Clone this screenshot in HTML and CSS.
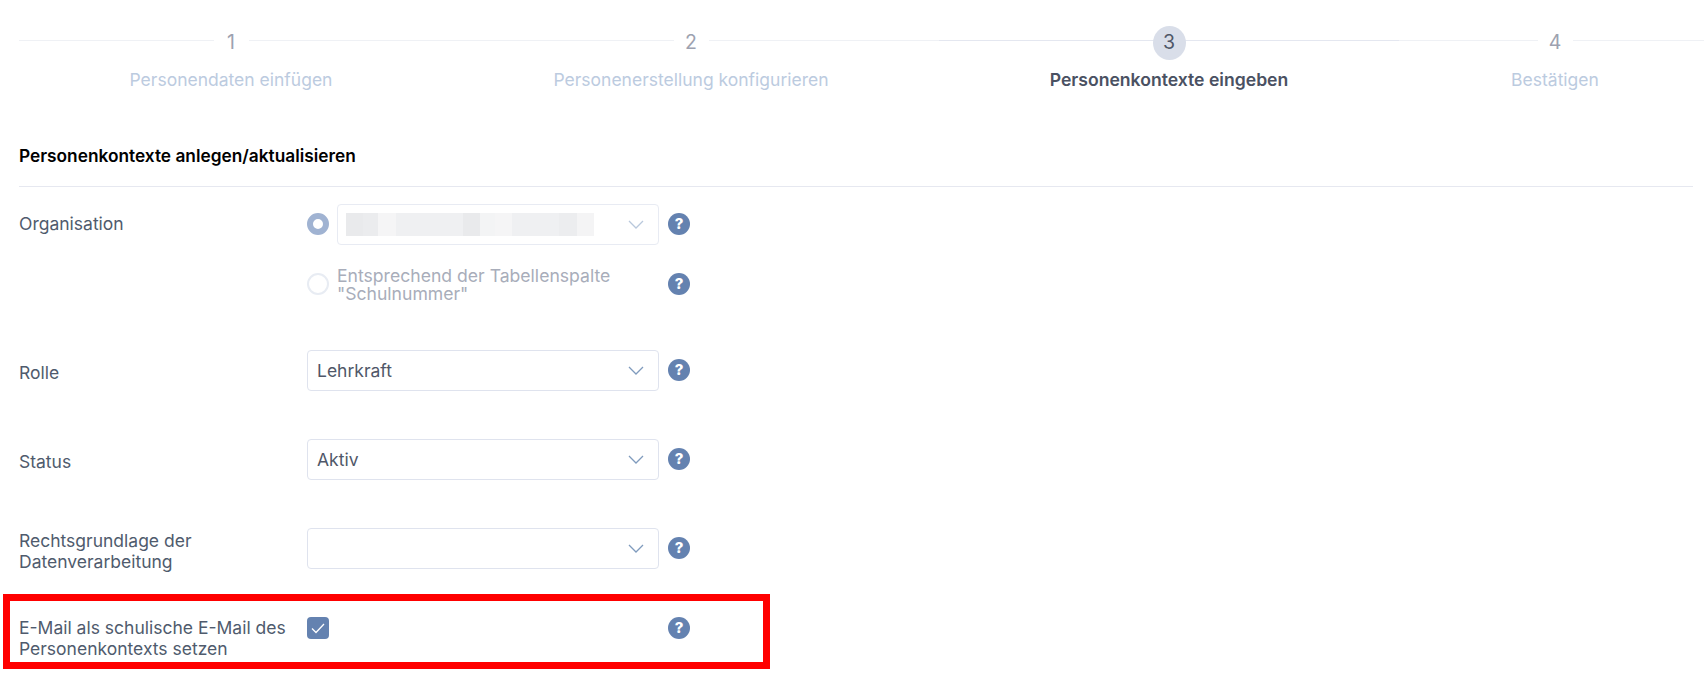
FILE: index.html
```html
<!DOCTYPE html>
<html lang="de">
<head>
<meta charset="utf-8">
<title>Personenkontexte eingeben</title>
<link rel="stylesheet" href="styles.css">
</head>
<body>
<main class="page">
  <ol class="stepper">
    <li class="step step-1"><span class="num">1</span><span class="step-label">Personendaten einfügen</span></li>
    <li class="step step-2"><span class="num">2</span><span class="step-label">Personenerstellung konfigurieren</span></li>
    <li class="step step-3 active"><span class="num">3</span><span class="step-label">Personenkontexte eingeben</span></li>
    <li class="step step-4"><span class="num">4</span><span class="step-label">Bestätigen</span></li>
  </ol>

  <h2 class="heading">Personenkontexte anlegen/aktualisieren</h2>

  <section class="form">
    <div class="row row-org">
      <div class="label label-org">Organisation</div>
      <div class="org-options">
        <div class="option option-select">
          <span class="radio checked"></span>
          <div class="select narrow"><span class="blurred"></span><svg class="chev light" viewBox="0 0 16 9"><path d="M1 1l7 7 7-7"/></svg></div>
          <span class="help">?</span>
        </div>
        <div class="option option-text">
          <span class="radio"></span>
          <div class="radio-text">Entsprechend der Tabellenspalte "Schulnummer"</div>
          <span class="help">?</span>
        </div>
      </div>
    </div>

    <div class="row">
      <div class="label label-single">Rolle</div>
      <div class="select"><span class="value">Lehrkraft</span><svg class="chev" viewBox="0 0 16 9"><path d="M1 1l7 7 7-7"/></svg></div>
      <span class="help help-top">?</span>
    </div>

    <div class="row">
      <div class="label label-single">Status</div>
      <div class="select"><span class="value">Aktiv</span><svg class="chev" viewBox="0 0 16 9"><path d="M1 1l7 7 7-7"/></svg></div>
      <span class="help help-top">?</span>
    </div>

    <div class="row">
      <div class="label label-double">Rechtsgrundlage der Datenverarbeitung</div>
      <div class="select"><svg class="chev" viewBox="0 0 16 9"><path d="M1 1l7 7 7-7"/></svg></div>
      <span class="help help-top">?</span>
    </div>

    <div class="row row-check">
      <div class="label label-double">E-Mail als schulische E-Mail des Personenkontexts setzen</div>
      <div class="check-cell">
        <span class="checkbox"><svg viewBox="0 0 22 22"><path d="M5 11.5l4 4 8-8.5"/></svg></span>
      </div>
      <span class="help">?</span>
      <div class="highlight"></div>
    </div>
  </section>
</main>
</body>
</html>
```

FILE: styles.css
```css
* { box-sizing: border-box; }

html, body {
  margin: 0;
  height: 688px;
  overflow: hidden;
  background: #fff;
}

body {
  font-family: Inter, "Liberation Sans", sans-serif;
  font-size: 17.5px;
  color: #4f5768;
}

.page {
  padding: 26px 0 0 19px;
  width: 1711px;
}

/* Stepper */
.stepper {
  display: grid;
  grid-template-columns: 424px 496px 460px 312px;
  list-style: none;
  margin: 0;
  padding: 0;
}

.step {
  position: relative;
  display: flex;
  flex-direction: column;
  align-items: center;
}

.step::before {
  content: "";
  position: absolute;
  left: 0;
  right: 0;
  top: 14px;
  height: 1px;
  background: #eff1f5;
}

.step.active::before { background: #e4e7f0; }

.num {
  position: relative;
  width: 35px;
  height: 34px;
  padding-bottom: 2px;
  display: flex;
  align-items: center;
  justify-content: center;
  background: #fff;
  color: #9da2b0;
  font-size: 19.5px;
}

.active .num {
  width: 33px;
  background: #d9dee9;
  border-radius: 50%;
  color: #4f5768;
}

.step-label {
  margin-top: 10px;
  line-height: 20px;
  color: #bccbdf;
}

.active .step-label {
  color: #4a5162;
  font-size: 17.6px;
  font-weight: 600;
}

/* Heading */
.heading {
  margin: 45px 18px 0 0;
  height: 52px;
  padding-top: 11px;
  border-bottom: 1px solid #e6e8f0;
  color: #000;
  font-size: 17.3px;
  line-height: 20px;
  font-weight: 600;
}

/* Form */
.form {
  padding-top: 17px;
  display: flex;
  flex-direction: column;
  gap: 48px;
}

.row {
  position: relative;
  display: flex;
  align-items: flex-start;
  height: 41px;
}

.label {
  flex: 0 0 288px;
  padding-right: 14px;
  line-height: 21px;
  color: #4f5b6d;
}

.label-org { padding-top: 9px; }
.label-single { padding-top: 12px; }
.label-double { padding-top: 2px; }
.row-check .label-double { padding-top: 0; }

.select {
  flex: 0 0 352px;
  height: 41px;
  padding: 0 14px 0 9px;
  display: flex;
  align-items: center;
  justify-content: space-between;
  border: 1px solid #dfe3ee;
  border-radius: 4px;
  background: #fff;
}

.select .chev { margin-left: auto; }

.value { color: #4f5768; line-height: 20px; }

.chev {
  width: 16px;
  height: 9px;
  fill: none;
  stroke: #7f9bbd;
  stroke-width: 1.3;
}

.chev.light { stroke: #b9c8dc; }

.help {
  flex: 0 0 22px;
  width: 22px;
  height: 22px;
  margin-left: 9px;
  border-radius: 50%;
  background: #6482b0;
  color: #fff;
  font-size: 15px;
  font-weight: 800;
  line-height: 22px;
  text-align: center;
}

.help-top { margin-top: 9px; }

/* Organisation */
.row.row-org { height: 98px; }

.org-options {
  display: flex;
  flex-direction: column;
  gap: 22px;
}

.option { display: flex; align-items: flex-start; }
.option-select .help { margin-top: 9px; }
.option-text .help { margin-top: 6px; }

.radio {
  flex: 0 0 22px;
  width: 22px;
  height: 22px;
  margin-right: 8px;
  border-radius: 50%;
  border: 2px solid #e8ecf3;
  background: #fff;
}

.option-select .radio { margin-top: 9px; }
.option-text .radio { margin-top: 6px; }

.radio.checked { border: 6px solid #a0b3d2; }

.select.narrow {
  flex-basis: 322px;
  width: 322px;
  border-color: #e8ebf3;
  padding-left: 8px;
}

.blurred {
  display: block;
  width: 248px;
  height: 23px;
  background: linear-gradient(90deg,
    #e9eaec 0 7%, #ebecee 7% 13%, #f5f5f6 13% 20%, #eff0f2 20% 47%,
    #e9eaec 47% 54%, #f3f4f5 54% 60%, #f5f5f6 60% 67%, #eff0f2 67% 86%,
    #ecedef 86% 93%, #f4f4f5 93% 100%);
}

.radio-text {
  width: 322px;
  font-size: 17.6px;
  line-height: 18px;
  color: #a8adba;
}

/* Checkbox row */
.check-cell { flex: 0 0 352px; }

.checkbox {
  display: block;
  width: 22px;
  height: 22px;
  border-radius: 4px;
  background: #6482b0;
}

.checkbox svg {
  display: block;
  width: 22px;
  height: 22px;
  fill: none;
  stroke: #fff;
  stroke-width: 1.3;
}

/* Annotation overlay */
.highlight {
  position: absolute;
  left: -16px;
  top: -23px;
  width: 767px;
  height: 75px;
  border: 7px solid #f00;
  pointer-events: none;
}
```
